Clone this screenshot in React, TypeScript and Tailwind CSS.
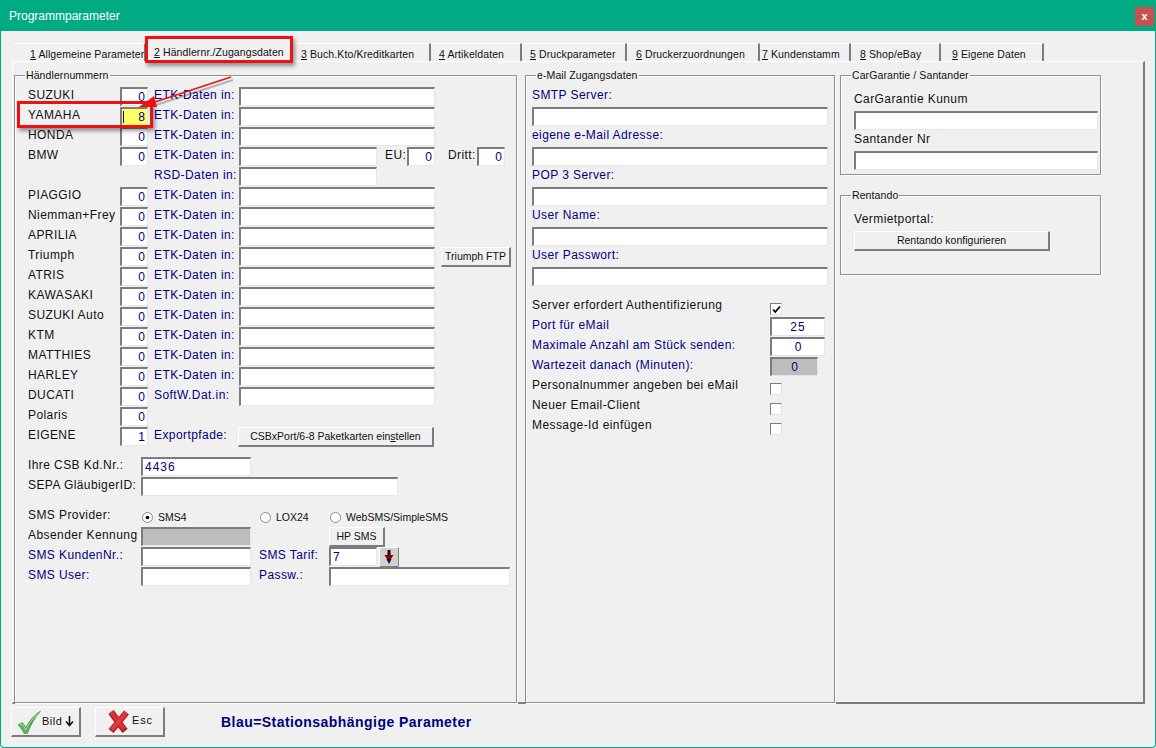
import React from "react";

const F = "font-['Liberation_Sans',Arial,sans-serif]";

function Field({ w, value, align = "right", gray, yellow, spaced, caret, h = "h-[19px]" }: { w: string; value?: string; align?: "right" | "left" | "center"; gray?: boolean; yellow?: boolean; spaced?: boolean; caret?: boolean; h?: string }) {
  const al = align === "right" ? "justify-end pr-[2px]" : align === "center" ? "justify-center" : "justify-start pl-[2px]";
  const bg = gray ? "bg-[#bdbdbd]" : yellow ? "bg-[#ffff66]" : "bg-white";
  return (
    <div className={`${w} ${h} ${bg} ${al} relative shrink-0 flex items-center border-t-2 border-l-2 border-r border-b border-t-[#7c7c7c] border-l-[#7c7c7c] border-r-[#e6e6e6] border-b-[#e6e6e6] text-[#000080] text-[12px] leading-none ${spaced ? "tracking-[1px]" : ""}`}>
      {caret && <span className="absolute left-[1px] top-[2px] h-[12px] w-[1px] bg-[#000080]" />}
      {value}
    </div>
  );
}

function Btn({ w, h = "h-[20px]", children, className = "" }: { w: string; h?: string; children: React.ReactNode; className?: string }) {
  return (
    <div className={`${w} ${h} ${className} shrink-0 flex items-center justify-center bg-[#f0f0f0] border-t border-l border-t-white border-l-white border-r-2 border-b-2 border-r-[#7c7c7c] border-b-[#7c7c7c] text-[10.5px] text-[#111] leading-none whitespace-nowrap`}>
      {children}
    </div>
  );
}

function Lbl({ w, blue, children, className = "" }: { w?: string; blue?: boolean; children: React.ReactNode; className?: string }) {
  return (
    <div className={`${w ?? ""} ${className} shrink-0 pt-[1px] leading-[15px] text-[12px] tracking-[0.42px] whitespace-nowrap ${blue ? "text-[#000080]" : "text-[#111]"}`}>
      {children}
    </div>
  );
}

function Group({ title, className, tx, children }: { title: string; className: string; tx: string; children: React.ReactNode }) {
  return (
    <div className={`relative border border-[#8f8f8f] shadow-[1px_1px_0_#fff,inset_1px_1px_0_#fff] ${className}`}>
      <div className={`absolute -top-[8px] ${tx} bg-[#f0f0f0] px-[1px] text-[10.5px] leading-[14px] tracking-[0.1px] text-[#111] whitespace-nowrap`}>{title}</div>
      {children}
    </div>
  );
}

function Row({ children, className = "" }: { children: React.ReactNode; className?: string }) {
  return <div className={`h-[20px] flex items-start ${className}`}>{children}</div>;
}

const Brand = ({ name, value = "0", yellow }: { name: string; value?: string; yellow?: boolean }) => (
  <>
    <Lbl w="w-[92px]">{name}</Lbl>
    <Field w="w-[28px]" value={value} yellow={yellow} caret={yellow} />
  </>
);

const EtkRow = ({ name, value, yellow, label = "ETK-Daten in:", children }: { name: string; value?: string; yellow?: boolean; label?: string; children?: React.ReactNode }) => (
  <Row>
    <Brand name={name} value={value} yellow={yellow} />
    <Lbl w="w-[85px]" blue className="ml-[6px]">{label}</Lbl>
    <Field w="w-[196px]" />
    {children}
  </Row>
);

function Radio({ on }: { on?: boolean }) {
  return (
    <svg width="11" height="11" viewBox="0 0 11 11" className="shrink-0">
      <circle cx="5.5" cy="5.5" r="5" fill="#fff" stroke="#8a8a8a" />
      {on && <circle cx="5.5" cy="5.5" r="1.8" fill="#000" />}
    </svg>
  );
}

function Check({ on }: { on?: boolean }) {
  return (
    <div className="mt-[6px] w-[12px] h-[12px] bg-white border-t border-l border-r border-b border-t-[#7c7c7c] border-l-[#7c7c7c] border-r-[#e0e0e0] border-b-[#e0e0e0] flex items-center justify-center">
      {on && (
        <svg width="9" height="9" viewBox="0 0 9 9">
          <path d="M1 4.5 L3.3 7 L8 1.5" fill="none" stroke="#000" strokeWidth="1.8" />
        </svg>
      )}
    </div>
  );
}

const tabs = [
  { n: "1", t: " Allgemeine Parameter", w: "w-[132px]", pl: "pl-[16px]" },
  { n: "2", t: " Händlernr./Zugangsdaten", w: "w-[147px]", pl: "pl-[8px]", active: true },
  { n: "3", t: " Buch.Kto/Kreditkarten", w: "w-[138px]", pl: "pl-[8px]" },
  { n: "4", t: " Artikeldaten", w: "w-[91px]", pl: "pl-[8px]" },
  { n: "5", t: " Druckparameter", w: "w-[105px]", pl: "pl-[8px]" },
  { n: "6", t: " Druckerzuordnungen", w: "w-[133px]", pl: "pl-[9px]" },
  { n: "7", t: " Kundenstamm", w: "w-[91px]", pl: "pl-[2px]" },
  { n: "8", t: " Shop/eBay", w: "w-[90px]", pl: "pl-[9px]" },
  { n: "9", t: " Eigene Daten", w: "w-[103px]", pl: "pl-[11px]" },
];

const radioCls = "mt-[4px] flex items-center gap-[5px] text-[10.5px] leading-[13px] text-[#111] whitespace-nowrap";

export default function App() {
  return (
    <div className={`${F} relative w-[1156px] h-[748px] overflow-hidden bg-[#f0f0f0] flex flex-col border-l border-r border-b border-[#00ab84] rounded-b-[4px]`}>
      {/* Title bar */}
      <div className="h-[31px] shrink-0 bg-[#00ab84] flex items-center justify-between pl-[9px] pr-[2px] -mx-px">
        <span className="text-[12px] text-white">Programmparameter</span>
        <div className="w-[19px] h-[19px] mt-[2px] bg-[#c75050] flex items-center justify-center text-white text-[11px] font-bold leading-none">x</div>
      </div>

      {/* Tabs */}
      <div className="h-[19px] mt-[11px] pl-[13px] flex shrink-0 items-end">
        {tabs.map((t) => (
          <div key={t.n} className={`${t.w} ${t.pl} ${t.active ? "h-[21px] pt-[4px] bg-[#f0f0f0] z-10 -mb-px" : "h-[18px] pt-[3px] border-t border-t-white border-r-2 border-r-[#7c7c7c]"} shrink-0 text-[10.5px] leading-[14px] tracking-[0.1px] text-[#111] whitespace-nowrap overflow-hidden`}>
            <span className="underline">{t.n}</span>
            {t.t}
          </div>
        ))}
      </div>

      {/* Panel */}
      <div className="ml-[11px] w-[1133px] h-[643px] shrink-0 flex items-start pt-[13px] pl-[1px] border-t border-t-white border-l border-l-white border-r-2 border-r-[#7c7c7c] border-b-2 border-b-[#7c7c7c]">
        {/* Group 1 */}
        <Group title="Händlernummern" tx="left-[10px]" className="w-[503px] h-[628px] pt-[11px] pl-[13px]">
          <EtkRow name="SUZUKI" />
          <EtkRow name="YAMAHA" value="8" yellow />
          <EtkRow name="HONDA" />
          <Row>
            <Brand name="BMW" />
            <Lbl w="w-[85px]" blue className="ml-[6px]">ETK-Daten in:</Lbl>
            <Field w="w-[138px]" />
            <Lbl w="w-[22px]" className="ml-[8px]">EU:</Lbl>
            <Field w="w-[28px]" value="0" />
            <Lbl w="w-[29px]" className="ml-[13px]">Dritt:</Lbl>
            <Field w="w-[28px]" value="0" />
          </Row>
          <Row>
            <Lbl w="w-[85px]" blue className="ml-[126px]">RSD-Daten in:</Lbl>
            <Field w="w-[138px]" />
          </Row>
          <EtkRow name="PIAGGIO" />
          <EtkRow name="Niemman+Frey" />
          <EtkRow name="APRILIA" />
          <EtkRow name="Triumph">
            <Btn w="w-[70px]" className="ml-[6px]">Triumph FTP</Btn>
          </EtkRow>
          <EtkRow name="ATRIS" />
          <EtkRow name="KAWASAKI" />
          <EtkRow name="SUZUKI Auto" />
          <EtkRow name="KTM" />
          <EtkRow name="MATTHIES" />
          <EtkRow name="HARLEY" />
          <EtkRow name="DUCATI" label="SoftW.Dat.in:" />
          <Row><Brand name="Polaris" /></Row>
          <Row>
            <Brand name="EIGENE" value="1" />
            <Lbl w="w-[84px]" blue className="ml-[6px]">Exportpfade:</Lbl>
            <Btn w="w-[196px]"><span>CSBxPort/6-8 Paketkarten ein<span className="underline">s</span>tellen</span></Btn>
          </Row>

          <Row className="mt-[10px]">
            <Lbl w="w-[113px]">Ihre CSB Kd.Nr.:</Lbl>
            <Field w="w-[110px]" value="4436" align="left" spaced />
          </Row>
          <Row>
            <Lbl w="w-[113px]">SEPA GläubigerID:</Lbl>
            <Field w="w-[257px]" />
          </Row>

          <Row className="mt-[10px]">
            <Lbl w="w-[114px]">SMS Provider:</Lbl>
            <div className={`w-[118px] shrink-0 ${radioCls}`}><Radio on />SMS4</div>
            <div className={`w-[70px] shrink-0 ${radioCls}`}><Radio />LOX24</div>
            <div className={radioCls}><Radio />WebSMS/SimpleSMS</div>
          </Row>
          <Row>
            <Lbl w="w-[113px]">Absender Kennung</Lbl>
            <Field w="w-[110px]" gray />
            <Btn w="w-[56px]" className="ml-[78px]">HP SMS</Btn>
          </Row>
          <Row>
            <Lbl w="w-[113px]" blue>SMS KundenNr.:</Lbl>
            <Field w="w-[110px]" />
            <Lbl w="w-[70px]" blue className="ml-[8px]">SMS Tarif:</Lbl>
            <Field w="w-[48px]" value="7" align="left" />
            <div className="w-[20px] h-[20px] ml-[2px] shrink-0 bg-[#d4d0c8] border-t border-l border-r border-b border-t-white border-l-white border-r-[#808080] border-b-[#808080] flex items-center justify-center">
              <svg width="10" height="15" viewBox="0 0 10 15">
                <rect x="3.5" y="0" width="3" height="5" fill="#111" />
                <path d="M0.5 5 H9.5 L7 9 H3 Z" fill="#8b0000" />
                <path d="M2.5 9 H7.5 L5 14 Z" fill="#000080" />
              </svg>
            </div>
          </Row>
          <Row>
            <Lbl w="w-[113px]" blue>SMS User:</Lbl>
            <Field w="w-[110px]" />
            <Lbl w="w-[70px]" blue className="ml-[8px]">Passw.:</Lbl>
            <Field w="w-[181px]" />
          </Row>
        </Group>

        {/* Group 2 */}
        <Group title="e-Mail Zugangsdaten" tx="left-[10px]" className="ml-[8px] w-[310px] h-[628px] pt-[11px] pl-[6px]">
          {["SMTP Server:", "eigene e-Mail Adresse:", "POP 3 Server:", "User Name:", "User Passwort:"].map((t) => (
            <div key={t} className="h-[40px]">
              <div className="h-[20px]"><Lbl blue>{t}</Lbl></div>
              <Field w="w-[296px]" />
            </div>
          ))}
          <Row className="mt-[10px]">
            <Lbl w="w-[238px]">Server erfordert Authentifizierung</Lbl>
            <Check on />
          </Row>
          <Row>
            <Lbl w="w-[238px]" blue>Port für eMail</Lbl>
            <Field w="w-[55px]" value="25" align="center" spaced />
          </Row>
          <Row>
            <Lbl w="w-[238px]" blue>Maximale Anzahl am Stück senden:</Lbl>
            <Field w="w-[55px]" value="0" align="center" />
          </Row>
          <Row>
            <Lbl w="w-[238px]" blue>Wartezeit danach (Minuten):</Lbl>
            <Field w="w-[48px]" value="0" align="center" gray />
          </Row>
          {["Personalnummer angeben bei eMail", "Neuer Email-Client", "Message-Id einfügen"].map((t) => (
            <Row key={t}>
              <Lbl w="w-[238px]">{t}</Lbl>
              <Check />
            </Row>
          ))}
        </Group>

        {/* Right column */}
        <div className="ml-[5px] flex flex-col gap-[20px]">
          <Group title="CarGarantie / Santander" tx="left-[10px]" className="w-[261px] h-[100px] pt-[15px] pl-[13px]">
            <div className="h-[20px]"><Lbl>CarGarantie Kunum</Lbl></div>
            <Field w="w-[244px]" />
            <div className="h-[20px] mt-[1px]"><Lbl>Santander Nr</Lbl></div>
            <Field w="w-[244px]" />
          </Group>
          <Group title="Rentando" tx="left-[10px]" className="w-[261px] h-[80px] pt-[15px] pl-[13px]">
            <div className="h-[20px]"><Lbl>Vermietportal:</Lbl></div>
            <Btn w="w-[196px]">Rentando konfigurieren</Btn>
          </Group>
        </div>
      </div>

      {/* Footer */}
      <div className="flex items-center pl-[10px] mt-[3px] shrink-0">
        <Btn w="w-[70px]" h="h-[30px]" className="justify-start pl-[5px]">
          <svg width="24" height="24" viewBox="0 0 24 24" className="shrink-0">
            <defs>
              <linearGradient id="chk" x1="0" y1="1" x2="1" y2="0">
                <stop offset="0" stopColor="#6dbb6a" />
                <stop offset="0.5" stopColor="#4aa64e" />
                <stop offset="1" stopColor="#7fcf7d" />
              </linearGradient>
            </defs>
            <path d="M1 15 L5.5 12.5 L9 17.5 C12 11 17 5 23.5 1 C18 8 13 15.5 10.5 23.5 L7 23.5 C5.5 20 3.5 17.5 1 15 Z" fill="url(#chk)" stroke="#3f8f45" strokeWidth="0.6" />
            <path d="M3 15 L5.5 14 L9 20 C12 13 16 8 20 4.5" fill="none" stroke="#a5e3a0" strokeWidth="0.9" />
          </svg>
          <span className="ml-[1px] text-[11px] tracking-[0.5px]">Bild</span>
          <svg width="9" height="11" viewBox="0 0 9 11" className="ml-[3px]">
            <path d="M4.5 0 V9 M1 5.5 L4.5 9.5 L8 5.5" fill="none" stroke="#111" strokeWidth="1.6" />
          </svg>
        </Btn>
        <Btn w="w-[70px]" h="h-[30px]" className="ml-[14px] justify-start pl-[12px]">
          <svg width="21" height="23" viewBox="0 0 21 23" className="shrink-0">
            <path d="M3 2 L17 21" stroke="#a81e22" strokeWidth="6.5" />
            <path d="M18.5 2.5 L3 21" stroke="#b8222a" strokeWidth="6.5" />
            <path d="M3 2 L16 19" stroke="#dc3236" strokeWidth="4" />
            <path d="M18 3 L3.5 19.5" stroke="#e0383c" strokeWidth="4" />
          </svg>
          <span className="ml-[3px] mb-[2px] text-[11px] tracking-[0.8px]">Esc</span>
        </Btn>
        <div className="ml-[56px] text-[14px] font-bold tracking-[0.45px] text-[#000080] whitespace-nowrap">Blau=Stationsabhängige Parameter</div>
      </div>

      {/* Annotations */}
      <div className="absolute left-[144px] top-[36px] w-[148px] h-[27px] border-[3px] border-[#ee1111] shadow-[2px_3px_4px_rgba(0,0,0,0.4)] z-20" />
      <div className="absolute left-[16px] top-[101px] w-[136px] h-[27px] border-[3px] border-[#ee1111] shadow-[2px_3px_4px_rgba(0,0,0,0.4)] z-20" />
      <svg className="absolute left-[129px] top-[70px] z-30" width="110" height="45" viewBox="0 0 110 45">
        <path d="M101 8 L24 33" stroke="rgba(0,0,0,0.25)" strokeWidth="2" transform="translate(2,2)" />
        <path d="M101 7 L22 33" stroke="#ee1111" strokeWidth="1.6" />
        <path d="M9 37 L24 26 L27 37 Z" fill="#ee1111" />
      </svg>
    </div>
  );
}
